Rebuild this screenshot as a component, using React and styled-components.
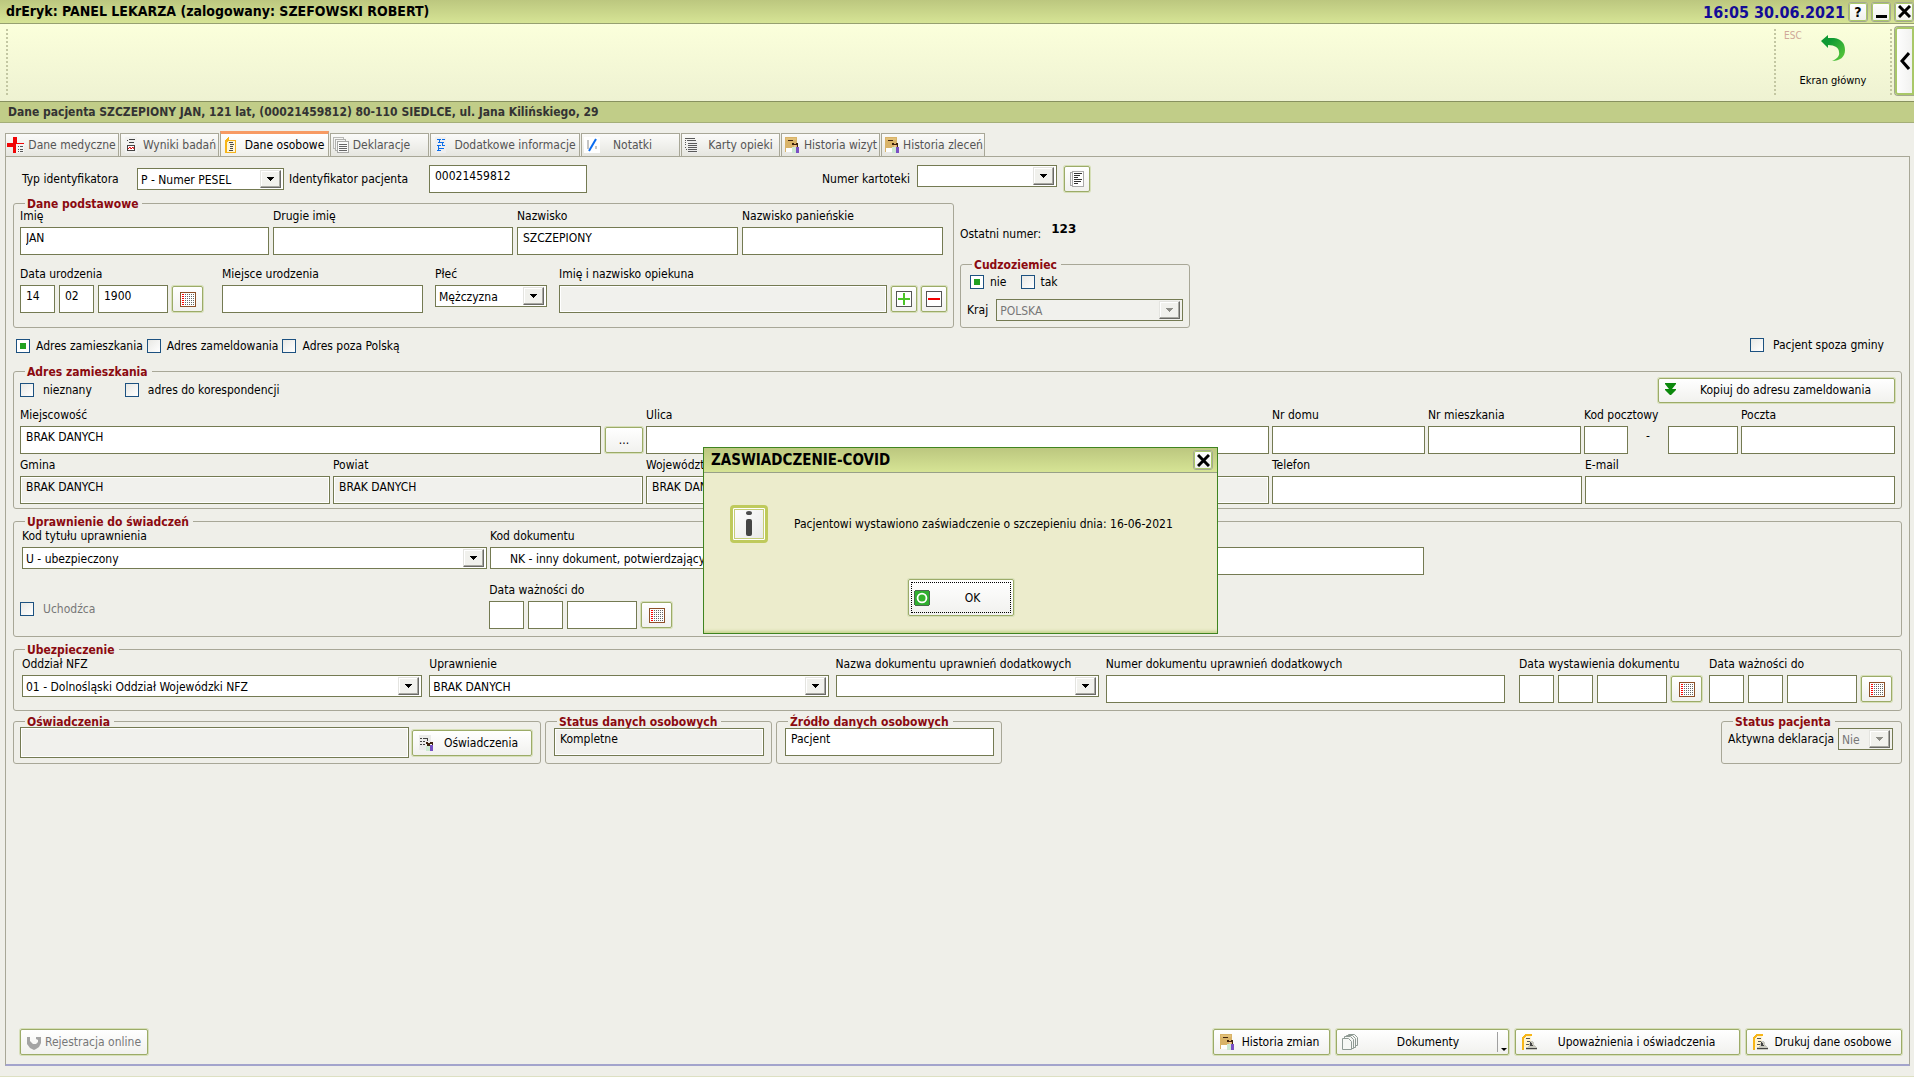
import React, { useState } from "react";
import styled, { createGlobalStyle, css } from "styled-components";

const App = () => {
  const [open, setOpen] = useState(true);
  return (
    <Screen>
      <GlobalStyle />
      <TitleBar>
        <Title>drEryk: PANEL LEKARZA (zalogowany: SZEFOWSKI ROBERT)</Title>
        <Clock>16:05 30.06.2021</Clock>
        <WindowButtons>
          <SmallButton aria-label="Pomoc">?</SmallButton>
          <SmallButton aria-label="Minimalizuj">
            <MinimizeIcon />
          </SmallButton>
          <SmallButton aria-label="Zamknij">
            <CloseIcon />
          </SmallButton>
        </WindowButtons>
      </TitleBar>

      <Toolbar>
        <DottedLine />
        <ToolbarSpace />
        <DottedLine />
        <MainScreenButton>
          <Shortcut>ESC</Shortcut>
          <BackIcon />
          <span>Ekran główny</span>
        </MainScreenButton>
        <DottedLine />
        <SideButton aria-label="Rozwiń">
          <ChevronIcon />
        </SideButton>
      </Toolbar>

      <PatientBar>
        Dane pacjenta SZCZEPIONY JAN, 121 lat, (00021459812) 80-110 SIEDLCE, ul. Jana Kilińskiego, 29
      </PatientBar>

      <Tabs role="tablist">
        {tabs.map(({ name, icon: Icon, width, active, short }) => (
          <Tab key={name} role="tab" aria-selected={!!active} $width={width} $active={active}>
            <Icon />
            <TabText $short={short}>{name}</TabText>
          </Tab>
        ))}
      </Tabs>

      <Panel>
        <IdentifierRow>
          <IdLabel htmlFor="id-type" $width={115}>Typ identyfikatora</IdLabel>
          <Select id="id-type" width={147} options={["P - Numer PESEL"]} />
          <IdLabel htmlFor="id-value" $width={145} $indent>Identyfikator pacjenta</IdLabel>
          <TextInput id="id-value" $width={158} defaultValue="00021459812" />
          <CardNumber>
            <CardLabel htmlFor="card">Numer kartoteki</CardLabel>
            <Select id="card" width={140} options={[""]} />
            <Button $square aria-label="Lista kartotek">
              <PageIcon />
            </Button>
          </CardNumber>
        </IdentifierRow>

        <PersonRow>
          <Group $bottom={14}>
            <Legend>Dane podstawowe</Legend>
            <NameGrid>
              <TextField id="first" label="Imię" value="JAN" />
              <TextField id="second" label="Drugie imię" />
              <TextField id="last" label="Nazwisko" value="SZCZEPIONY" />
              <TextField id="maiden" label="Nazwisko panieńskie" />
            </NameGrid>
            <BirthGrid>
              <DateField id="birth" label="Data urodzenia" values={["14", "02", "1900"]} />
              <TextField id="birthplace" label="Miejsce urodzenia" />
              <Field id="sex" label="Płeć">
                <Select id="sex" options={["Mężczyzna"]} />
              </Field>
              <Field id="guardian" label="Imię i nazwisko opiekuna">
                <TextInput id="guardian" readOnly />
                <Button $square aria-label="Dodaj opiekuna">
                  <PlusIcon />
                </Button>
                <Button $square aria-label="Usuń opiekuna">
                  <MinusIcon />
                </Button>
              </Field>
            </BirthGrid>
          </Group>
          <ForeignColumn>
            <LastNumber>
              Ostatni numer: <strong>123</strong>
            </LastNumber>
            <Group $bottom={6}>
              <Legend>Cudzoziemiec</Legend>
              <ForeignChecks>
                <Check label="nie" checked />
                <Check label="tak" />
              </ForeignChecks>
              <CountryRow>
                <label htmlFor="country">Kraj</label>
                <Select id="country" options={["POLSKA"]} disabled />
              </CountryRow>
            </Group>
          </ForeignColumn>
        </PersonRow>

        <AddressKinds>
          <Check label="Adres zamieszkania" checked />
          <Check label="Adres zameldowania" />
          <Check label="Adres poza Polską" />
          <PushRight>
            <Check label="Pacjent spoza gminy" wide />
          </PushRight>
        </AddressKinds>

        <Group $bottom={4}>
          <Legend>Adres zamieszkania</Legend>
          <AddressOptions>
            <Check label="nieznany" wide />
            <Check label="adres do korespondencji" wide />
            <CopyButton>
              <DownIcon />
              <ButtonText>Kopiuj do adresu zameldowania</ButtonText>
            </CopyButton>
          </AddressOptions>
          <AddressGrid>
            <Field id="city" label="Miejscowość">
              <TextInput id="city" defaultValue="BRAK DANYCH" />
              <MoreButton aria-label="Wybierz miejscowość">...</MoreButton>
            </Field>
            <TextField id="street" label="Ulica" />
            <TextField id="house" label="Nr domu" />
            <TextField id="flat" label="Nr mieszkania" />
            <Field id="zip" label="Kod pocztowy">
              <TextInput id="zip" $width={44} />
              <Dash>-</Dash>
              <TextInput aria-label="Kod pocztowy, druga część" $width={70} />
            </Field>
            <TextField id="post" label="Poczta" />
          </AddressGrid>
          <RegionGrid>
            <TextField id="commune" label="Gmina" value="BRAK DANYCH" readOnly />
            <TextField id="county" label="Powiat" value="BRAK DANYCH" readOnly />
            <TextField id="province" label="Województwo" value="BRAK DANYCH" readOnly />
            <TextField id="phone" label="Telefon" />
            <TextField id="email" label="E-mail" />
          </RegionGrid>
        </Group>

        <Group $top={2} $bottom={7} $gap={6}>
          <Legend>Uprawnienie do świadczeń</Legend>
          <EntitlementGrid>
            <Field id="title-code" label="Kod tytułu uprawnienia">
              <Select id="title-code" options={["U - ubezpieczony"]} />
            </Field>
            <Field id="doc-code" label="Kod dokumentu">
              <Select id="doc-code" indent options={["NK - inny dokument, potwierdzający prawo do świadczeń"]} />
            </Field>
            <TextField id="doc-number" label="Numer dokumentu" />
          </EntitlementGrid>
          <RefugeeGrid>
            <RefugeeCell>
              <Check label="Uchodźca" wide muted />
            </RefugeeCell>
            <DateField id="entitled-to" label="Data ważności do" />
          </RefugeeGrid>
        </Group>

        <Group $top={2} $bottom={7} $gap={6}>
          <Legend>Ubezpieczenie</Legend>
          <InsuranceGrid>
            <Field id="nfz" label="Oddział NFZ">
              <Select id="nfz" options={["01 - Dolnośląski Oddział Wojewódzki NFZ"]} />
            </Field>
            <Field id="right" label="Uprawnienie">
              <Select id="right" options={["BRAK DANYCH"]} />
            </Field>
            <Field id="extra-name" label="Nazwa dokumentu uprawnień dodatkowych">
              <Select id="extra-name" options={[""]} />
            </Field>
            <TextField id="extra-number" label="Numer dokumentu uprawnień dodatkowych" />
            <InsuranceDates>
              <DateField id="issued" label="Data wystawienia dokumentu" />
              <DateField id="valid" label="Data ważności do" />
            </InsuranceDates>
          </InsuranceGrid>
        </Group>

        <StatusRow>
          <Group $bottom={5}>
            <Legend>Oświadczenia</Legend>
            <StatementRow>
              <TextInput aria-label="Oświadczenia" readOnly $tall />
              <StatementButton>
                <PersonPageIcon />
                <ButtonText>Oświadczenia</ButtonText>
              </StatementButton>
            </StatementRow>
          </Group>
          <Group $top={1} $bottom={7}>
            <Legend>Status danych osobowych</Legend>
            <StatusField>
              <TextInput aria-label="Status danych osobowych" readOnly defaultValue="Kompletne" />
            </StatusField>
          </Group>
          <Group $top={1} $bottom={7}>
            <Legend>Źródło danych osobowych</Legend>
            <StatusField>
              <TextInput aria-label="Źródło danych osobowych" defaultValue="Pacjent" />
            </StatusField>
          </Group>
          <span />
          <Group $top={1} $bottom={7}>
            <Legend>Status pacjenta</Legend>
            <DeclarationRow>
              <label htmlFor="declaration">Aktywna deklaracja</label>
              <Select id="declaration" width={55} options={["Nie"]} disabled />
            </DeclarationRow>
          </Group>
        </StatusRow>

        <Footer>
          <FooterButton $width={128} disabled>
            <OnlineIcon />
            <ButtonText>Rejestracja online</ButtonText>
          </FooterButton>
          <FooterActions>
            <FooterButton $width={117}>
              <HistoryIcon />
              <ButtonText>Historia zmian</ButtonText>
            </FooterButton>
            <FooterButton $width={173}>
              <DocumentsIcon />
              <ButtonText>Dokumenty</ButtonText>
              <SplitArrow />
            </FooterButton>
            <FooterButton $width={225}>
              <PrintFolderIcon />
              <ButtonText>Upoważnienia i oświadczenia</ButtonText>
            </FooterButton>
            <FooterButton $width={156}>
              <PrintFolderIcon />
              <ButtonText>Drukuj dane osobowe</ButtonText>
            </FooterButton>
          </FooterActions>
        </Footer>
      </Panel>

      {open && (
        <Overlay>
          <Dialog role="dialog" aria-labelledby="dialog-title">
            <DialogTitle>
              <span id="dialog-title">ZASWIADCZENIE-COVID</span>
              <SmallButton aria-label="Zamknij okno" onClick={() => setOpen(false)}>
                <CloseIcon />
              </SmallButton>
            </DialogTitle>
            <DialogBody>
              <Message>
                <InfoBox>
                  <InfoIcon />
                </InfoBox>
                <span>Pacjentowi wystawiono zaświadczenie o szczepieniu dnia: 16-06-2021</span>
              </Message>
              <OkButton onClick={() => setOpen(false)}>
                <OkFocus>
                  <OkIcon />
                  <ButtonText>OK</ButtonText>
                </OkFocus>
              </OkButton>
            </DialogBody>
          </Dialog>
        </Overlay>
      )}
    </Screen>
  );
};

const Field = ({ id, label, children }) => (
  <FieldBox>
    <FieldLabel htmlFor={id}>{label}</FieldLabel>
    <Controls>{children}</Controls>
  </FieldBox>
);

const TextField = ({ id, label, value, readOnly }) => (
  <Field id={id} label={label}>
    <TextInput id={id} defaultValue={value} readOnly={readOnly} />
  </Field>
);

const DateField = ({ id, label, values = ["", "", ""] }) => (
  <Field id={id} label={label}>
    <TextInput id={id} $width={35} defaultValue={values[0]} />
    <TextInput aria-label={`${label}, miesiąc`} $width={35} defaultValue={values[1]} />
    <TextInput aria-label={`${label}, rok`} $width={70} defaultValue={values[2]} />
    <CalendarButton aria-label={`${label}, kalendarz`}>
      <CalendarIcon />
    </CalendarButton>
  </Field>
);

const Select = ({ id, options, width, disabled, indent }) => (
  <SelectBox $width={width} $disabled={disabled}>
    <SelectInput id={id} disabled={disabled} $indent={indent}>
      {options.map((option) => (
        <option key={option}>{option}</option>
      ))}
    </SelectInput>
    <SelectArrow>
      <svg width="7" height="4" viewBox="0 0 7 4" shapeRendering="crispEdges">
        <path d="M0 0h7v1H6v1H5v1H4v1H3V3H2V2H1V1H0z" fill={disabled ? "#8e8e88" : "#000"} />
      </svg>
    </SelectArrow>
  </SelectBox>
);

const Check = ({ label, checked, wide, muted }) => (
  <CheckLabel $wide={wide} $muted={muted}>
    <CheckInput type="checkbox" defaultChecked={checked} disabled={muted} />
    {label}
  </CheckLabel>
);

/* icons */

const Icon = ({ children, size = 18 }) => (
  <svg width={size} height={size} viewBox="0 0 18 18" shapeRendering="crispEdges" aria-hidden="true">
    {children}
  </svg>
);

const MedicalIcon = () => (
  <Icon>
    <path d="M6 1h4v6h7v4h-7v6H6v-6H0V7h6z" fill="#f00505" />
    <path d="M9 8h8v9H9z" fill="#f4f4f2" />
    <path d="M10 7h7v1h-7z" fill="#f00505" />
    <path d="M11 10h1v1h-1zm2 0h3v1h-3zm-2 3h1v1h-1zm2 0h3v1h-3zm-2 2h1v1h-1zm2 0h3v1h-3z" fill="#555" />
  </Icon>
);

const ResultsIcon = () => (
  <Icon>
    <path d="M3 1h12v16H3z" fill="#f2f2f0" />
    <path d="M5 4h1v1H5zm2-1h6v1H7zm0 3h5v1H7z" fill="#444" />
    <path d="M5.500 9.500h7v5h-7z" fill="#fff" stroke="#444" />
    <path d="M6 13l2-2 1 2 2-2 1 2" fill="none" stroke="#e00000" shapeRendering="auto" />
  </Icon>
);

const FolderIcon = () => (
  <Icon>
    <path d="M5 5h8v11H4V5z" fill="#fff6d8" />
    <path d="M7 4h7v13H4v-1h9V5H7z" fill="#f5b21a" />
    <path d="M3 4l4-3v3L5 6v11H3z" fill="#f7b618" />
    <path d="M7 6h4v1H7zm1 2h4v1H8zm0 2h3v1H8zm0 2h3v1H8zm-1 2h4v1H7z" fill="#4b4b4b" />
  </Icon>
);

const StackIcon = () => (
  <Icon>
    <path d="M1.500 1.500h10v11h-10z" fill="#f6f6f4" stroke="#b9b9b6" />
    <path d="M3.500 3.500h10v11h-10z" fill="#f6f6f4" stroke="#b0b0ad" />
    <path d="M5.500 5.500h11v11h-11z" fill="#fbfbfa" stroke="#a8a8a5" />
    <path d="M7 8h8v1H7zm0 2h8v1H7zm0 2h8v1H7zm0 2h8v1H7z" fill="#666" />
  </Icon>
);

const InfoListIcon = () => (
  <Icon>
    <path d="M3 1h11v16H3z" fill="#efeff0" />
    <path d="M5 3h4v1H5zm5 0h3v1h-3zM6 6h6v1H6zm-1 3h4v1H5zm5 0h3v1h-3zm-4 3h6v1H6zM5 14h4v1H5zM7 3h1v4H7zm3 3h1v4h-1zM6 9h1v6H6z" fill="#0b6ee8" />
  </Icon>
);

const NoteIcon = () => (
  <Icon>
    <path d="M1 1h16v16H1z" fill="#fff" />
    <path d="M4 4h2v9H4zm8 6h2v3h-2z" fill="#c4c4c4" />
    <path d="M13 3L6 15" stroke="#0a6cf0" strokeWidth="2" shapeRendering="auto" />
  </Icon>
);

const ListIcon = () => (
  <Icon>
    <path d="M5 5h10v12H5z" fill="#eee" />
    <path d="M2 2h10v1H2zm0 2h1v1H2zm2 0h9v1H4zM2 6h1v1H2zm3 1h9v1H5zM2 8h1v1H2zm3 1h9v1H5zm-3 2h1v1H2zm3 0h9v1H5zm0 2h9v1H5zm-2 0h1v1H3zm2 2h9v1H5z" fill="#5a5a5a" />
  </Icon>
);

const HistoryIcon = () => (
  <Icon>
    <path d="M2 1h12v15H2z" fill="#d9b368" />
    <path d="M3 2h10v2H3z" fill="#e2c078" />
    <path d="M5 4h5v1H5z" fill="#3d220d" />
    <path d="M9 7h2v1h2V7h2v4h-1V9h-1v2h-2V9H9z" fill="#3d220d" />
    <path d="M11 9h2v2h-2z" fill="#f1c29a" />
    <path d="M3 12h6v4H3z" fill="#fff" />
    <path d="M9 11h4v6H9z" fill="#cde9d2" />
    <path d="M13 11h3v6h-3z" fill="#7a4fc4" />
  </Icon>
);

const PersonPageIcon = () => (
  <Icon>
    <path d="M1 1h12v15H1z" fill="#ececea" />
    <path d="M2 4h2v1H2zm3 0h5v1H5zM2 7h2v1H2zm3 0h2v1H5zM2 10h2v1H2zm3 0h2v1H5zM9 4h1v3H9z" fill="#444" />
    <path d="M8 8h2v1h2V8h3v3h-1v-1h-2v2H9v-2H8z" fill="#3d220d" />
    <path d="M8 12h4v5H8z" fill="#cdebd0" />
    <path d="M12 11h3v6h-3z" fill="#7550c4" />
  </Icon>
);

const PageIcon = () => (
  <Icon>
    <path d="M2.500 2.500h4v13h-4z" fill="#f6f6f6" stroke="#aaa" />
    <path d="M4.500 1.500h11v15h-11z" fill="#fff" stroke="#aaa" />
    <path d="M6 3h8v1H6zm0 2h6v1H6zm0 2h4v1H6zm0 2h8v1H6zm0 2h7v1H6zm0 2h4v1H6z" fill="#333" />
  </Icon>
);

const PlusIcon = () => (
  <Icon>
    <rect x="1.500" y="1.500" width="15" height="15" rx="1" fill="#fff" stroke="#555" />
    <path d="M8 3h2v5h5v2h-5v5H8v-5H3V8h5z" fill="#4cc427" />
  </Icon>
);

const MinusIcon = () => (
  <Icon>
    <rect x="1.500" y="1.500" width="15" height="15" rx="1" fill="#fff" stroke="#555" />
    <path d="M3 8h12v2H3z" fill="#f30000" />
  </Icon>
);

const CalendarIcon = () => (
  <Icon>
    <path d="M1.500 2.500h15v14h-15z" fill="#fff" stroke="#8c4f28" />
    <path d="M4 4v12" stroke="#f00" strokeWidth="2" strokeDasharray="1 1" />
    <path d="M6.500 4v11M8.500 4v11M10.500 4v11M12.500 4v11M14.500 4v11" stroke="#666" strokeDasharray="1 1" />
  </Icon>
);

const DownIcon = () => (
  <Icon>
    <path d="M1 2h11v1L8 8h4v1l-5 5h-1L1 9V8h4L1 3z" fill="#0c880c" shapeRendering="auto" />
  </Icon>
);

const PrintFolderIcon = () => (
  <Icon>
    <path d="M2 4l4-3h6v2H7L4 5v12H2z" fill="#f7b618" />
    <path d="M4 5l3-2h4v11H4z" fill="#fff3cf" />
    <path d="M6 5h4v1H6zm1 3h3v1H7zm-1 3h4v1H6z" fill="#555" />
    <path d="M10 8h3l2 5 2 1v3H6v-3l3-1z" fill="#c9c9bf" />
    <path d="M10 9l2 1 1 3h-3zM6 15h11v1H6z" fill="#444" />
  </Icon>
);

const DocumentsIcon = () => (
  <Icon>
    <g fill="#f6f7f5" stroke="#8f9a94" shapeRendering="auto">
      <path d="M7.500 1.500h6l3 3v8h-9z" />
      <path d="M5.500 2.500h6l3 3v9h-9z" />
      <path d="M3.500 3.500h6l3 3v9h-9z" />
      <path d="M1.500 5.500h6l3 3v8h-9z" />
    </g>
  </Icon>
);

const OnlineIcon = () => (
  <Icon>
    <path d="M2 4h3v4l3 3h3l2-2V7l-2-1V4h5v6l-2 4-3 2-2 1-4-2-3-4z" fill="#a4a4a4" shapeRendering="auto" />
  </Icon>
);

const OkIcon = () => (
  <Icon size={16}>
    <path d="M1 1h16v16H1z" fill="#2fae2f" stroke="#35553a" />
    <circle cx="9" cy="9" r="5" fill="#34b42c" stroke="#fff" strokeWidth="2" shapeRendering="auto" />
  </Icon>
);

const InfoIcon = () => (
  <svg width="8" height="28" viewBox="0 0 8 28" aria-hidden="true">
    <ellipse cx="4" cy="3" rx="3" ry="2" fill="#4d4d4d" />
    <rect x="1" y="9" width="6" height="17" rx="2" fill="#444" />
  </svg>
);

const CloseIcon = () => (
  <svg width="13" height="13" viewBox="0 0 13 13" aria-hidden="true">
    <path d="M1 1l11 11M12 1L1 12" stroke="#000" strokeWidth="3" />
  </svg>
);

const MinimizeIcon = () => (
  <svg width="13" height="13" viewBox="0 0 13 13" aria-hidden="true">
    <path d="M1 10h11v3H1z" fill="#000" />
  </svg>
);

const ChevronIcon = () => (
  <svg width="10" height="18" viewBox="0 0 10 18" aria-hidden="true">
    <path d="M9 1L2 9l7 8" fill="none" stroke="#000" strokeWidth="3" />
  </svg>
);

const BackIcon = () => (
  <svg width="26" height="28" viewBox="0 0 26 28" aria-hidden="true">
    <defs>
      <linearGradient id="back" x1="0" y1="0" x2="1" y2="1">
        <stop offset="0.3" stopColor="#0f9a33" />
        <stop offset="1" stopColor="#62cc3a" />
      </linearGradient>
    </defs>
    <path d="M1 7l7-6v3h6c8 1 11 6 11 12 0 7-5 11-13 11 5-2 8-5 7-9 0-4-4-7-11-7v3z" fill="url(#back)" />
  </svg>
);

const tabs = [
  { name: "Dane medyczne", icon: MedicalIcon, width: 114 },
  { name: "Wyniki badań", icon: ResultsIcon, width: 99 },
  { name: "Dane osobowe", icon: FolderIcon, width: 109, active: true },
  { name: "Deklaracje", icon: StackIcon, width: 99, short: true },
  { name: "Dodatkowe informacje", icon: InfoListIcon, width: 150 },
  { name: "Notatki", icon: NoteIcon, width: 99, short: true },
  { name: "Karty opieki", icon: ListIcon, width: 99 },
  { name: "Historia wizyt", icon: HistoryIcon, width: 99 },
  { name: "Historia zleceń", icon: HistoryIcon, width: 104 },
];

/* styles */

const GlobalStyle = createGlobalStyle`
  *, *::before, *::after {
    box-sizing: border-box;
  }
  body {
    margin: 0;
    background: #efefe9;
    color: #000;
    font: 12px/14px "DejaVu Sans Condensed", "DejaVu Sans", sans-serif;
  }
  button, input, select {
    font: inherit;
    color: inherit;
    margin: 0;
  }
  svg {
    display: block;
    flex: none;
  }
`;

const Screen = styled.div`
  display: flex;
  flex-direction: column;
  min-height: 100vh;
  padding-bottom: 10px;
  border-bottom: 1px solid #dde0c2;
`;

const TitleBar = styled.header`
  display: flex;
  align-items: center;
  height: 24px;
  padding-left: 6px;
  background: linear-gradient(#bcc77f, #d6e495);
  border-bottom: 1px solid #96a070;
`;

const Title = styled.h1`
  flex: 1;
  margin: 0 0 2px;
  font-size: 14px;
  line-height: 20px;
`;

const Clock = styled.time`
  margin-right: 3px;
  padding-top: 2px;
  color: #140c96;
  font-size: 16px;
  font-weight: bold;
`;

const WindowButtons = styled.div`
  display: flex;
  gap: 3px;
`;

const SmallButton = styled.button`
  display: grid;
  place-items: center;
  width: 20px;
  height: 20px;
  padding: 0;
  background: linear-gradient(#fff, #f0f0ec);
  border: 1px solid #a4a890;
  border-radius: 3px;
  box-shadow: inset 0 0 0 1px #a9c868;
  font-size: 14px;
  font-weight: bold;
`;

const Toolbar = styled.div`
  display: flex;
  height: 77px;
  padding: 2px 0 5px 6px;
  background: linear-gradient(#fbffdb, #eef2d2);
`;

const DottedLine = styled.div`
  height: 66px;
  margin-top: 3px;
  border-left: 2px dotted #c3c7a2;
`;

const ToolbarSpace = styled.div`
  flex: 1;
`;

const MainScreenButton = styled.button`
  display: grid;
  grid-template-rows: 42px 24px;
  justify-items: center;
  align-content: start;
  align-items: center;
  width: 114px;
  padding: 1px 0 0;
  background: none;
  border: 0;
  font-size: 11px;
  position: relative;
`;

const Shortcut = styled.span`
  position: absolute;
  top: 3px;
  left: 8px;
  color: #cfa898;
  font-size: 10px;
`;

const SideButton = styled.button`
  display: grid;
  place-items: center;
  width: 20px;
  margin-left: 2px;
  padding: 0;
  background: linear-gradient(90deg, #fff, #f0f0ee);
  border: 1px solid #a4a890;
  border-right: 0;
  border-radius: 4px 0 0 4px;
  box-shadow: inset 0 0 0 2px #a9c868;
`;

const PatientBar = styled.div`
  height: 22px;
  padding-left: 8px;
  background: #c1cd88;
  border-top: 1px solid #87905f;
  border-bottom: 1px solid #a4ae78;
  color: #333;
  font-weight: bold;
  line-height: 20px;
`;

const Tabs = styled.div`
  display: flex;
  align-items: flex-end;
  gap: 1px;
  height: 33px;
  padding: 0 5px;
`;

const Tab = styled.button`
  display: flex;
  align-items: center;
  gap: 2px;
  width: ${(props) => props.$width}px;
  height: 23px;
  padding: 0 1px;
  background: linear-gradient(#fbfbf9, #e6e6e0);
  border: 1px solid #a8a797;
  border-bottom: 0;
  color: #555;
  white-space: nowrap;

  ${(props) =>
    props.$active &&
    css`
      height: 26px;
      margin-bottom: -1px;
      padding-bottom: 2px;
      background: linear-gradient(#fff, #efefe9);
      border-top: 3px solid #f79a63;
      color: #000;
    `}
`;

const TabText = styled.span`
  flex: 1;
  padding-right: ${(props) => (props.$short ? 16 : 0)}px;
  text-align: center;
`;

const Panel = styled.main`
  display: flex;
  flex: 1;
  flex-direction: column;
  margin: 0 4px 0 5px;
  padding: 8px 7px 9px;
  border: 1px solid #a8a797;
  border-bottom: 2px solid #a3a4cc;
`;

const IdentifierRow = styled.div`
  display: flex;
  align-items: center;
  height: 28px;
  padding-left: 9px;
`;

const IdLabel = styled.label`
  width: ${(props) => props.$width}px;
  padding-left: ${(props) => (props.$indent ? 5 : 0)}px;
`;

const CardNumber = styled.div`
  display: flex;
  align-items: flex-start;
  align-self: stretch;
  gap: 7px;
  margin-left: 12.5%;
`;

const CardLabel = styled.label`
  padding-top: 7px;
`;

const PersonRow = styled.div`
  display: grid;
  grid-template-columns: minmax(0, 941fr) minmax(0, 230fr) minmax(0, 706fr);
  gap: 6px;
  margin-top: 4px;
`;

const Group = styled.fieldset`
  min-width: 0;
  margin: ${(props) => props.$gap || 0}px 0 0;
  padding: ${(props) => props.$top || 0}px 6px ${(props) => props.$bottom}px;
  border: 1px solid #a8a797;
  border-radius: 3px;
`;

const Legend = styled.legend`
  height: 12px;
  margin-left: 5px;
  padding: 0 4px 0 2px;
  color: #8b0a10;
  font-weight: bold;
  line-height: 14px;
`;

const NameGrid = styled.div`
  display: grid;
  grid-template-columns: minmax(0, 249fr) minmax(0, 240fr) minmax(0, 221fr) minmax(0, 201fr);
  gap: 4px;
  padding-right: 4px;
`;

const BirthGrid = styled.div`
  display: grid;
  grid-template-columns: 190px minmax(0, 201fr) 112px minmax(0, 388fr);
  gap: 12px;
  margin-top: 12px;
`;

const ForeignColumn = styled.div`
  display: flex;
  flex-direction: column;
  justify-content: space-between;
`;

const LastNumber = styled.div`
  display: flex;
  gap: 10px;
  padding-top: 30px;

  strong {
    margin-top: -5px;
    font-family: "DejaVu Sans", sans-serif;
  }
`;

const ForeignChecks = styled.div`
  display: flex;
  gap: 14px;
  padding: 5px 0 10px 3px;
`;

const CountryRow = styled.div`
  display: flex;
  align-items: center;
  gap: 8px;
`;

const AddressKinds = styled.div`
  display: flex;
  align-items: center;
  gap: 4px;
  height: 14px;
  margin: 11px 3px 12px;
`;

const PushRight = styled.div`
  margin: 0 15px 0 auto;
`;

const AddressOptions = styled.div`
  display: flex;
  align-items: center;
  gap: 33px;
  height: 26px;
`;

const AddressGrid = styled.div`
  display: grid;
  grid-template-columns:
    minmax(0, 623fr) minmax(0, 623fr) minmax(0, 153fr) minmax(0, 153fr)
    minmax(0, 154fr) minmax(0, 154fr);
  gap: 3px;
  margin-top: 5px;
`;

const RegionGrid = styled.div`
  display: grid;
  grid-template-columns:
    minmax(0, 310fr) minmax(0, 310fr) minmax(0, 623fr) minmax(0, 310fr)
    minmax(0, 310fr);
  gap: 3px;
  margin-top: 4px;
`;

const EntitlementGrid = styled.div`
  display: grid;
  grid-template-columns: minmax(0, 465fr) minmax(0, 510fr) minmax(0, 421fr) minmax(0, 468fr);
  gap: 3px;
  padding-left: 2px;
`;

const RefugeeGrid = styled.div`
  display: grid;
  grid-template-columns: minmax(0, 466fr) minmax(0, 1405fr);
  gap: 3px;
  margin-top: 8px;
`;

const RefugeeCell = styled.div`
  display: flex;
  align-self: end;
  padding-bottom: 13px;
`;

const InsuranceGrid = styled.div`
  display: grid;
  grid-template-columns: minmax(0, 400fr) minmax(0, 399fr) minmax(0, 263fr) minmax(0, 399fr) auto;
  gap: 7px;
  padding: 0 3px 0 2px;
`;

const InsuranceDates = styled.div`
  display: flex;
  gap: 7px;
  padding-left: 7px;
`;

const StatusRow = styled.div`
  display: grid;
  grid-template-columns:
    minmax(0, 528fr) minmax(0, 227fr) minmax(0, 226fr) minmax(0, 711fr)
    minmax(0, 181fr);
  gap: 4px;
  margin-top: 4px;
`;

const StatementRow = styled.div`
  display: flex;
  align-items: center;
  gap: 3px;
  padding-right: 2px;
`;

const StatusField = styled.div`
  display: flex;
  padding: 0 1px 0 2px;
`;

const DeclarationRow = styled.div`
  display: flex;
  align-items: center;
  justify-content: flex-end;
  gap: 4px;
  min-height: 28px;
  padding: 0 2px 6px;
  white-space: nowrap;
`;

const FieldBox = styled.div`
  display: flex;
  flex-direction: column;
  gap: 4px;
  min-width: 0;
`;

const FieldLabel = styled.label`
  height: 14px;
  white-space: nowrap;
`;

const Controls = styled.div`
  display: flex;
  gap: 4px;
  align-items: flex-start;
  min-height: 28px;
`;

const TextInput = styled.input`
  flex: ${(props) => (props.$width ? "none" : "1")};
  width: ${(props) => (props.$width ? `${props.$width}px` : "100%")};
  min-width: 0;
  height: ${(props) => (props.$tall ? 31 : 28)}px;
  padding: 0 5px 6px;
  background: ${(props) => (props.readOnly ? "#f1f1ed" : "#fff")};
  border: 1px solid #747a52;
  box-shadow: inset 0 0 0 1px #fff;
  outline: 0;
`;

const SelectBox = styled.div`
  display: grid;
  flex: ${(props) => (props.$width ? "none" : "1")};
  width: ${(props) => (props.$width ? `${props.$width}px` : "auto")};
  min-width: 0;
  height: 22px;
  background: ${(props) => (props.$disabled ? "#f1f1ed" : "#fff")};
  border: 1px solid #747a52;
`;

const SelectInput = styled.select`
  grid-area: 1 / 1;
  min-width: 0;
  padding: 1px 24px 0 ${(props) => (props.$indent ? 19 : 3)}px;
  background: none;
  border: 0;
  outline: 0;
  appearance: none;

  &:disabled {
    color: #777;
    opacity: 1;
  }
`;

const SelectArrow = styled.span`
  display: grid;
  grid-area: 1 / 1;
  place-items: center;
  justify-self: end;
  width: 21px;
  height: 18px;
  margin: 1px 2px 1px 1px;
  background: #f1f1ed;
  border: 1px solid;
  border-color: #e4e4e0 #6a6a66 #6a6a66 #e4e4e0;
  box-shadow: inset -1px -1px 0 #a8a8a2, inset 1px 1px 0 #fff;
  pointer-events: none;
`;

const CheckLabel = styled.label`
  display: inline-flex;
  align-items: center;
  gap: ${(props) => (props.$wide ? 9 : 6)}px;
  color: ${(props) => (props.$muted ? "#777" : "inherit")};
  white-space: nowrap;
`;

const CheckInput = styled.input`
  width: 14px;
  height: 14px;
  background: linear-gradient(135deg, #e8e8e4, #fff);
  border: 1px solid #1c5180;
  appearance: none;

  &:checked {
    background: linear-gradient(#21a121, #21a121) center / 6px 6px no-repeat, #fff;
  }
`;

const Button = styled.button`
  display: flex;
  align-items: center;
  flex: none;
  justify-content: center;
  width: ${(props) => (props.$square ? "26px" : "auto")};
  height: 26px;
  padding: 0 5px;
  background: linear-gradient(#fff, #f1f1ee);
  border: 1px solid #9cab68;
  border-radius: 2px;
  box-shadow: 0 0 0 1px #d6dfb8;
  white-space: nowrap;

  ${Controls} > & {
    margin-top: 1px;
  }

  ${CardNumber} > & {
    margin-top: 1px;
  }

  &:disabled {
    color: #777;
  }
`;

const ButtonText = styled.span`
  flex: 1;
  text-align: center;
`;

const CalendarButton = styled(Button)`
  width: 31px;
`;

const MoreButton = styled(Button)`
  width: 38px;
`;

const CopyButton = styled(Button)`
  width: 237px;
  height: 25px;
  margin-left: auto;
`;

const StatementButton = styled(Button)`
  width: 120px;
`;

const Dash = styled.span`
  flex: 1;
  padding-top: 3px;
  text-align: center;
`;

const Footer = styled.footer`
  display: flex;
  justify-content: space-between;
  margin-top: auto;
  padding-left: 7px;
`;

const FooterActions = styled.div`
  display: flex;
  gap: 6px;
`;

const FooterButton = styled(Button)`
  width: ${(props) => props.$width}px;
  padding: 0 4px;
`;

const SplitArrow = styled.i`
  align-self: stretch;
  width: 10px;
  margin: 2px -3px 2px 0;
  border-left: 1px solid #a0a0a0;

  &::after {
    content: "";
    display: block;
    margin: 16px 0 0 3px;
    border: 3px solid transparent;
    border-top-color: #000;
    border-bottom: 0;
  }
`;

const Overlay = styled.div`
  position: fixed;
  inset: 0;
  display: grid;
  place-items: center;
  padding: 4px 0 0 7px;
`;

const Dialog = styled.section`
  width: 515px;
  background: #ececcc;
  border: 1px solid #3f8420;
  box-shadow: inset 0 -4px 3px -2px #c8d590;
`;

const DialogTitle = styled.div`
  display: flex;
  align-items: center;
  justify-content: space-between;
  height: 25px;
  padding: 0 4px 0 7px;
  background: linear-gradient(#bcc77f, #d6e495);
  border-bottom: 1px solid #98a088;
  font-size: 15px;
  font-weight: bold;
`;

const DialogBody = styled.div`
  display: flex;
  flex-direction: column;
  align-items: center;
  gap: 36px;
  padding: 32px 0 17px;
`;

const Message = styled.div`
  display: flex;
  align-items: center;
  align-self: stretch;
  gap: 26px;
  padding-left: 26px;
  white-space: nowrap;
`;

const InfoBox = styled.div`
  display: grid;
  place-items: center;
  width: 38px;
  height: 38px;
  background: linear-gradient(135deg, #fff, #e8e8e6);
  border: 3px solid #bfca5c;
  border-radius: 4px;
  box-shadow: inset 0 0 0 1px #fff, inset 0 0 0 2px #c5cd78;
`;

const OkButton = styled(Button)`
  width: 106px;
  height: 37px;
  padding: 2px;
`;

const OkFocus = styled.span`
  display: flex;
  flex: 1;
  align-items: center;
  align-self: stretch;
  gap: 6px;
  padding-left: 2px;
  border: 1px dotted #000;
`;

export default App;
